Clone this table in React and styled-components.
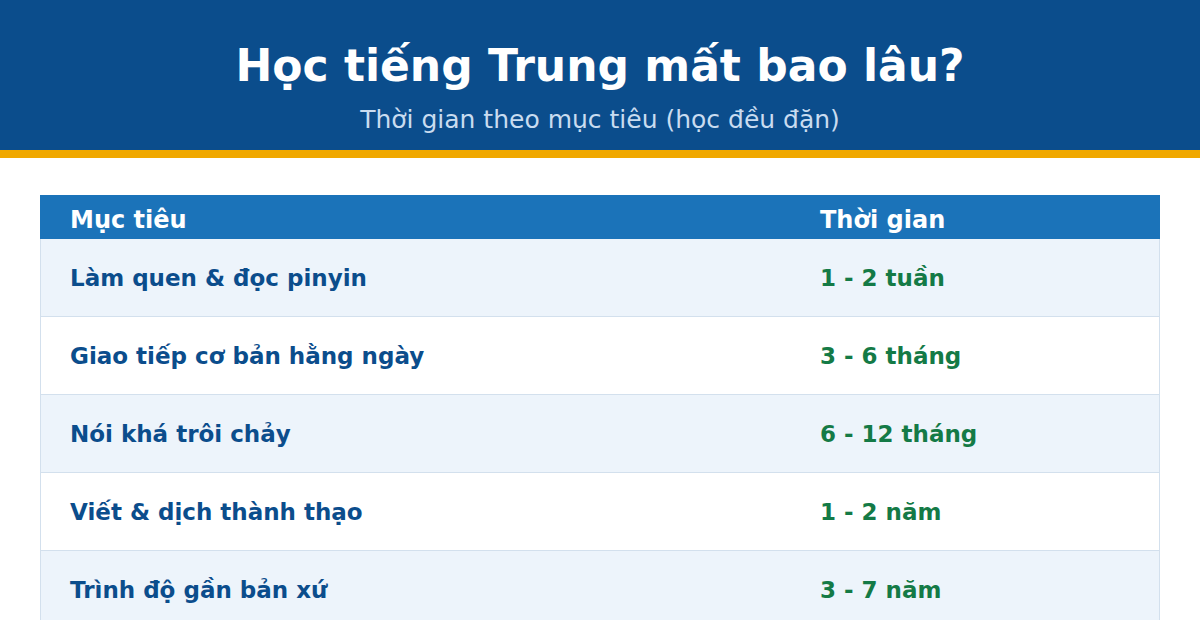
import React from 'react';
import styled, { createGlobalStyle } from 'styled-components';

const rows = [
  { goal: 'Làm quen & đọc pinyin', time: '1 - 2 tuần' },
  { goal: 'Giao tiếp cơ bản hằng ngày', time: '3 - 6 tháng' },
  { goal: 'Nói khá trôi chảy', time: '6 - 12 tháng' },
  { goal: 'Viết & dịch thành thạo', time: '1 - 2 năm' },
  { goal: 'Trình độ gần bản xứ', time: '3 - 7 năm' },
];

const GlobalStyle = createGlobalStyle`
  body {
    margin: 0;
    background: #ffffff;
    font-family: 'DejaVu Sans', 'Noto Sans', sans-serif;
  }
`;

const Page = styled.div`
  width: 1200px;
  height: 620px;
  overflow: hidden;
  background: #ffffff;
`;

const Banner = styled.header`
  height: 150px;
  background: #0b4d8c;
  border-bottom: 8px solid #f0a800;
  display: flex;
  flex-direction: column;
  align-items: center;
  box-sizing: content-box;
`;

const Title = styled.h1`
  margin: 38px 0 0;
  font-size: 44px;
  line-height: 56px;
  font-weight: bold;
  color: #ffffff;
`;

const Subtitle = styled.p`
  margin: 11px 0 0;
  font-size: 25px;
  line-height: 30px;
  color: #c9dcf0;
`;

const Table = styled.div`
  margin: 37px 40px 0;
  display: grid;
  grid-template-columns: 750px 1fr;
`;

const HeadCell = styled.div`
  height: 44px;
  background: #1b73b9;
  color: #ffffff;
  font-size: 24px;
  font-weight: bold;
  padding: 10px 0 0 30px;
  box-sizing: border-box;
  line-height: 30px;
`;

const Cell = styled.div`
  height: 78px;
  box-sizing: border-box;
  display: flex;
  align-items: center;
  padding-left: ${(p) => (p.$green ? '30px' : '29px')};
  font-size: 23px;
  font-weight: bold;
  background: ${(p) => (p.$alt ? '#edf4fb' : '#ffffff')};
  color: ${(p) => (p.$green ? '#147a46' : '#0b4d8c')};
  border-bottom: 1px solid #d3e0ed;
  border-left: ${(p) => (p.$green ? 'none' : '1px solid #d3e0ed')};
  border-right: ${(p) => (p.$green ? '1px solid #d3e0ed' : 'none')};
`;

export default function App() {
  return (
    <Page>
      <GlobalStyle />
      <Banner>
        <Title>Học tiếng Trung mất bao lâu?</Title>
        <Subtitle>Thời gian theo mục tiêu (học đều đặn)</Subtitle>
      </Banner>
      <Table>
        <HeadCell>Mục tiêu</HeadCell>
        <HeadCell>Thời gian</HeadCell>
        {rows.map((r, i) => (
          <React.Fragment key={r.goal}>
            <Cell $alt={i % 2 === 0}>{r.goal}</Cell>
            <Cell $alt={i % 2 === 0} $green>
              {r.time}
            </Cell>
          </React.Fragment>
        ))}
      </Table>
    </Page>
  );
}
